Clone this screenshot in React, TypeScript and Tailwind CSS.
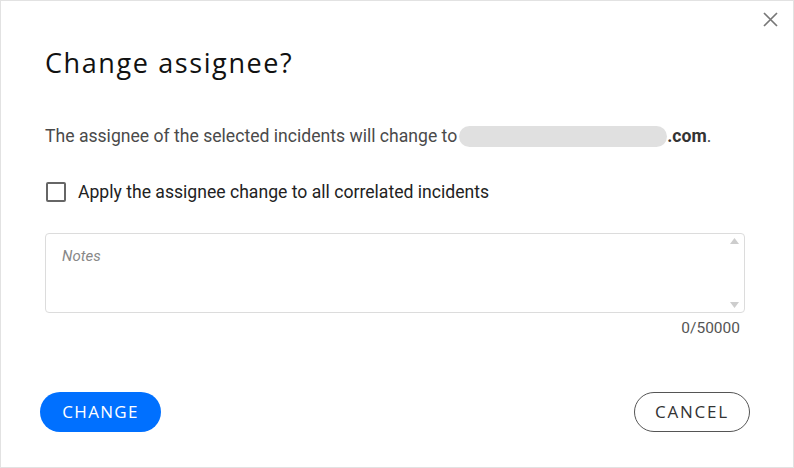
import React from "react";

function CloseIcon() {
  return (
    <svg width="15" height="15" viewBox="0 0 15 15" fill="none">
      <path d="M1 1L14 14M14 1L1 14" stroke="#777" strokeWidth="1.7" />
    </svg>
  );
}

function Arrow({ up }: { up?: boolean }) {
  return (
    <svg width="9" height="6" viewBox="0 0 9 6">
      <path d={up ? "M4.5 0L9 6H0Z" : "M0 0H9L4.5 6Z"} fill="#cdcdcd" />
    </svg>
  );
}

export default function App() {
  return (
    <div className="w-[794px] h-[468px] bg-white border border-[#e2e2e2] relative flex flex-col px-[44px] font-['Roboto',sans-serif] text-[#333]">
      <button className="absolute right-[15px] top-[11px]">
        <CloseIcon />
      </button>
      <h2 className="mt-[44px] text-[27px] leading-[36px] text-[#111] font-['Open_Sans',sans-serif] tracking-[1.6px]">
        Change assignee?
      </h2>
      <p className="mt-[43px] text-[17.6px] leading-[24px] text-[#4a4a4a] flex items-center">
        The assignee of the selected incidents will change to
        <span className="ml-[2px] inline-block w-[208px] h-[21px] rounded-full bg-[#e0e0e0]" />
        <span className="font-bold text-[#333]">.com</span>.
      </p>
      <label className="mt-[32px] flex items-center gap-[12px] text-[17.6px] leading-[24px] text-[#222]">
        <span className="w-[20px] h-[20px] ml-[1px] border-2 border-[#666] rounded-[2px]" />
        Apply the assignee change to all correlated incidents
      </label>
      <div className="mt-[29px] mr-[4px] relative h-[80px] border border-[#dcdcdc] rounded-[4px]">
        <div className="pl-[16px] pt-[11px] text-[15px] italic text-[#888]">Notes</div>
        <span className="absolute right-[5px] top-[4px] flex">
          <Arrow up />
        </span>
        <span className="absolute right-[5px] bottom-[4px] flex">
          <Arrow />
        </span>
      </div>
      <div className="mt-[4px] text-right pr-[9px] text-[15.5px] text-[#555]">0/50000</div>
      <div className="mt-auto mb-[35px] -ml-[5px] -mr-[1px] flex justify-between items-center">
        <button className="w-[121px] h-[40px] rounded-full bg-[#0070ff] text-white text-[17px] font-['Open_Sans',sans-serif] font-medium tracking-[1.3px]">
          CHANGE
        </button>
        <button className="w-[116px] h-[40px] rounded-full border border-[#555] text-[#333] text-[17px] font-['Open_Sans',sans-serif] tracking-[1.8px]">
          CANCEL
        </button>
      </div>
    </div>
  );
}
